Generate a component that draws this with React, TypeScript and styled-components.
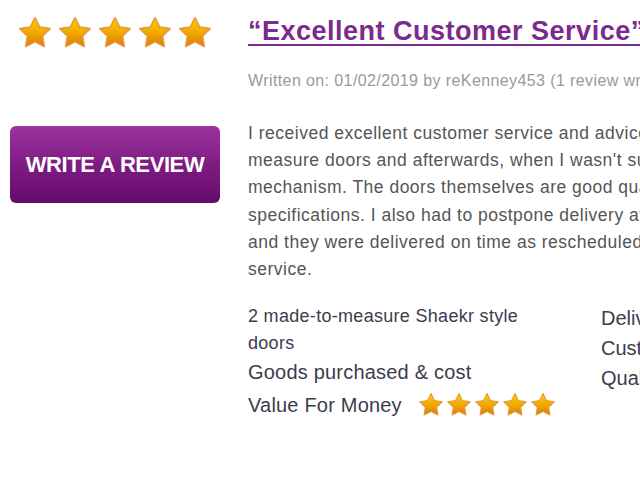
import React from "react";
import styled, { createGlobalStyle } from "styled-components";

const Global = createGlobalStyle`
  html, body { margin: 0; padding: 0; background: #fff; overflow: hidden; }
  body { font-family: "Liberation Sans", Arial, sans-serif; }
`;

const Page = styled.div`
  display: flex;
  width: 640px;
  height: 480px;
  overflow: hidden;
  background: #fff;
`;

const Sidebar = styled.aside`
  width: 238px;
  flex: none;
  padding: 14px 0 0 10px;
  display: flex;
  flex-direction: column;
`;

const StarRow = styled.div<{ $gap: number }>`
  display: flex;
  gap: ${(p) => p.$gap}px;
  align-items: center;
`;

const BigStars = styled(StarRow)`
  padding-left: 6px;
`;

const ReviewButton = styled.button`
  margin-top: 74px;
  width: 210px;
  height: 77px;
  border: none;
  border-radius: 6px;
  background: linear-gradient(to bottom, #9d339f 0%, #7e1c83 50%, #65096b 100%);
  color: #fff;
  font-family: "Liberation Sans", Arial, sans-serif;
  font-weight: bold;
  font-size: 22px;
  letter-spacing: -0.4px;
  padding: 0;
  cursor: pointer;
`;

const Main = styled.main`
  flex: none;
  width: 780px;
  padding-top: 16px;
`;

const Title = styled.a`
  display: inline-block;
  font-size: 27px;
  line-height: 30px;
  font-weight: bold;
  letter-spacing: 0.5px;
  color: #7b2a8e;
  text-decoration: underline;
  text-decoration-thickness: 2px;
  text-underline-offset: 4px;
  white-space: nowrap;
`;

const Meta = styled.div`
  margin-top: 25px;
  font-size: 16px;
  line-height: 20px;
  letter-spacing: 0.4px;
  color: #9a9a9a;
  white-space: nowrap;
`;

const Body = styled.p`
  margin: 29px 0 0;
  font-size: 17.5px;
  line-height: 27.2px;
  letter-spacing: 0.5px;
  color: #555;
`;

const Line = styled.span`
  display: block;
  white-space: nowrap;
`;

const Details = styled.div`
  margin-top: 20px;
  display: flex;
  color: #3c3c4c;
`;

const DetailCol = styled.div<{ $w: number }>`
  width: ${(p) => p.$w}px;
  flex: none;
`;

const Purchased = styled.div`
  font-size: 18px;
  letter-spacing: 0.3px;
  line-height: 27px;
`;

const Label = styled.div`
  font-size: 20px;
  letter-spacing: 0.2px;
  line-height: 30px;
`;

const ValueRow = styled.div`
  display: flex;
  align-items: center;
  gap: 15px;
  font-size: 20px;
  letter-spacing: 0.2px;
  line-height: 36px;
`;

const RightItem = styled.div`
  font-size: 20px;
  line-height: 30px;
  white-space: nowrap;
`;

const Star: React.FC<{ size: number; id: string }> = ({ size, id }) => (
  <svg width={size} height={size} viewBox="0 0 24 24" aria-hidden="true">
    <defs>
      <linearGradient id={id} x1="0" y1="0" x2="0" y2="1">
        <stop offset="0" stopColor="#fbd000" />
        <stop offset="0.55" stopColor="#f0a800" />
        <stop offset="1" stopColor="#d9780c" />
      </linearGradient>
    </defs>
    <path
      d="M12 2.2l2.95 6.1 6.65.95-4.8 4.7 1.13 6.65L12 17.5l-5.93 3.1 1.13-6.65-4.8-4.7 6.65-.95z"
      fill={`url(#${id})`}
      stroke="#e59a3a"
      strokeWidth="1"
      strokeLinejoin="round"
    />
  </svg>
);

const Stars: React.FC<{ size: number; prefix: string }> = ({ size, prefix }) => (
  <>
    {[0, 1, 2, 3, 4].map((i) => (
      <Star key={i} size={size} id={`${prefix}${i}`} />
    ))}
  </>
);

export default function App() {
  return (
    <>
      <Global />
      <Page>
        <Sidebar>
          <BigStars $gap={2}>
            <Stars size={38} prefix="big" />
          </BigStars>
          <ReviewButton>WRITE A REVIEW</ReviewButton>
        </Sidebar>
        <Main>
          <Title>“Excellent Customer Service”</Title>
          <Meta>Written on: 01/02/2019 by reKenney453 (1 review written)</Meta>
          <Body>
            <Line>I received excellent customer service and advice when ordering my made-to-</Line>
            <Line>measure doors and afterwards, when I wasn't sure about fitting the sliding</Line>
            <Line>mechanism. The doors themselves are good quality and made exactly to my</Line>
            <Line>specifications. I also had to postpone delivery after my builder was delayed</Line>
            <Line>and they were delivered on time as rescheduled. Thank you for the excellent</Line>
            <Line>service.</Line>
          </Body>
          <Details>
            <DetailCol $w={353}>
              <DetailCol $w={300}>
                <Purchased>2 made-to-measure Shaekr style doors</Purchased>
              </DetailCol>
              <Label>Goods purchased &amp; cost</Label>
              <ValueRow>
                Value For Money
                <StarRow $gap={0}>
                  <Stars size={28} prefix="sm" />
                </StarRow>
              </ValueRow>
            </DetailCol>
            <DetailCol $w={300}>
              <RightItem>Delivery</RightItem>
              <RightItem>Customer Service</RightItem>
              <RightItem>Quality</RightItem>
            </DetailCol>
          </Details>
        </Main>
      </Page>
    </>
  );
}
